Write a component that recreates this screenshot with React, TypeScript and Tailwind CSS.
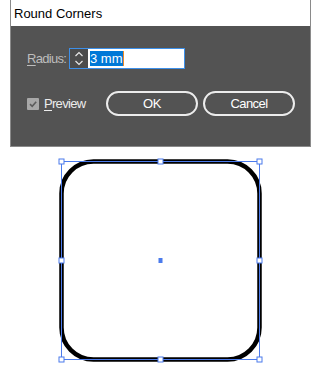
export default function App() {
  const blue = "#4b7bec";
  const handles: [number, number][] = [
    [61.5, 161.5], [160.5, 161.5], [259.5, 161.5],
    [61.5, 260.5], [259.5, 260.5],
    [61.5, 359.5], [160.5, 359.5], [259.5, 359.5],
  ];
  return (
    <div className="w-[320px] h-[376px] bg-white overflow-hidden font-['Liberation_Sans',sans-serif]">
      <div className="ml-[10px] w-[301px] h-[147px] flex flex-col border-x border-b border-[#8a8a8a]">
        <div className="h-[26px] bg-white flex items-center pl-[3px] text-[13px] leading-[15px] text-black">
          Round Corners
        </div>
        <div className="flex-1 bg-[#535353] pl-[16px] pr-[15px] pt-[22px]">
          <div className="flex items-center h-[21px]">
            <span className="w-[42px] whitespace-nowrap text-[13px] leading-[15px] text-[#bdbdbd] tracking-[-0.7px]">
              <span className="underline underline-offset-2">R</span>adius:
            </span>
            <div className="w-[116px] h-[21px] border border-[#3d8fe8] flex">
              <div className="w-[18px] bg-[#4c4c4c] flex items-center justify-center">
                <svg width="10" height="17" viewBox="0 0 10 17">
                  <path d="M1.5 6 L5 2.5 L8.5 6" fill="none" stroke="#e8e8e8" strokeWidth="1.2" />
                  <path d="M1.5 11 L5 14.5 L8.5 11" fill="none" stroke="#e8e8e8" strokeWidth="1.2" />
                </svg>
              </div>
              <div className="flex-1 bg-white flex items-center pl-[2px]">
                <span className="bg-[#0078d7] text-white text-[13px] leading-[15px]">3 mm</span>
                <span className="w-[1px] h-[15px] bg-[#f08a24]" />
              </div>
            </div>
          </div>
          <div className="flex items-center mt-[22px] h-[25px]">
            <div className="w-[12px] h-[12px] bg-[#a8a8a8] rounded-[1px] flex items-center justify-center">
              <svg width="10" height="10" viewBox="0 0 10 10">
                <path d="M2 5.2 L4.2 7.3 L8.2 2.8" fill="none" stroke="#5c5c5c" strokeWidth="1.6" />
              </svg>
            </div>
            <span className="ml-[5px] text-[13px] leading-[15px] text-[#ececec] tracking-[-0.7px]">
              <span className="underline underline-offset-2">P</span>review
            </span>
            <div className="ml-auto flex gap-[5px]">
              <button className="w-[92px] h-[25px] rounded-full border-2 border-[#ececec] text-white text-[13px] leading-[15px] tracking-[-0.4px] flex items-center justify-center">
                OK
              </button>
              <button className="w-[92px] h-[25px] rounded-full border-2 border-[#ececec] text-white text-[13px] leading-[15px] tracking-[-0.6px] flex items-center justify-center">
                Cancel
              </button>
            </div>
          </div>
        </div>
      </div>
      <svg width="320" height="229" viewBox="0 147 320 229" className="block">
        <rect x="61.5" y="161.5" width="198" height="198" rx="32" ry="32" fill="none" stroke="#000" strokeWidth="4.5" />
        <rect x="61.5" y="161.5" width="198" height="198" fill="none" stroke={blue} strokeWidth="1" />
        {handles.map(([x, y], i) => (
          <rect key={i} x={x - 2.5} y={y - 2.5} width="5" height="5" fill="#fff" stroke={blue} strokeWidth="1" />
        ))}
        <rect x="158.5" y="258" width="4" height="5" fill={blue} />
      </svg>
    </div>
  );
}
